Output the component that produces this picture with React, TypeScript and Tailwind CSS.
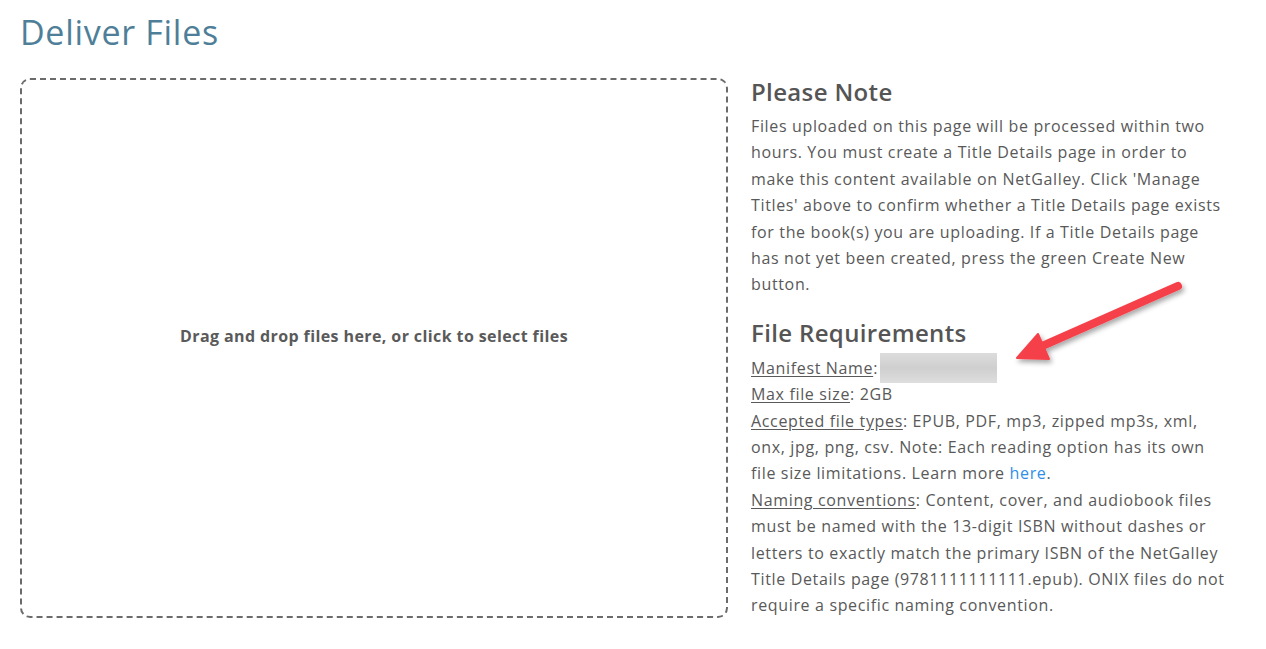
import React from 'react';

const font = { fontFamily: '"Open Sans", Lato, Arial, sans-serif' };

function Label({ children }: { children: React.ReactNode }) {
  return <span className="underline underline-offset-2">{children}</span>;
}

function Arrow() {
  return (
    <svg
      className="pointer-events-none absolute left-[1000px] top-[270px]"
      width="200"
      height="110"
      viewBox="0 0 200 110"
    >
      <defs>
        <filter id="shadow" x="-20%" y="-20%" width="140%" height="160%">
          <feDropShadow dx="2" dy="3" stdDeviation="2.5" floodColor="#000" floodOpacity="0.35" />
        </filter>
      </defs>
      <g filter="url(#shadow)" fill="#f5414a" stroke="#f5414a">
        <line x1="178" y1="16" x2="40" y2="77" strokeWidth="8" strokeLinecap="round" />
        <polygon points="17,88 38,64 49,89" strokeWidth="2" strokeLinejoin="round" />
      </g>
    </svg>
  );
}

export default function App() {
  return (
    <div className="relative min-h-[649px] bg-white px-5 pt-[12px] text-[#595959]" style={font}>
      <h1 className="text-[34px] leading-[41px] tracking-[0.7px] text-[#4f7f98]">Deliver Files</h1>

      <div className="mt-[25px] flex gap-[23px]">
        <div className="flex h-[540px] w-[708px] shrink-0 items-center justify-center rounded-[10px] border-2 border-dashed border-[#6b6b6b] pb-[24px]">
          <p className="text-[16px] font-bold tracking-[0.4px] text-[#5a5a5a]">
            Drag and drop files here, or click to select files
          </p>
        </div>

        <div className="-mt-[1px] w-[490px] whitespace-nowrap text-[16px] leading-[26.4px] tracking-[0.65px]">
          <h2 className="text-[24px] font-semibold leading-[30px] tracking-[0.35px] text-[#555]">Please Note</h2>
          <p className="mt-[6px]">
            Files uploaded on this page will be processed within two
            <br />
            hours. You must create a Title Details page in order to
            <br />
            make this content available on NetGalley. Click 'Manage
            <br />
            Titles' above to confirm whether a Title Details page exists
            <br />
            for the book(s) you are uploading. If a Title Details page
            <br />
            has not yet been created, press the green Create New
            <br />
            button.
          </p>

          <h2 className="mt-[20px] text-[24px] font-semibold leading-[30px] tracking-[0.35px] text-[#555]">
            File Requirements
          </h2>
          <div className="mt-[7px]">
            <div className="flex h-[26.4px] items-center">
              <Label>Manifest Name</Label>:
              <span className="ml-[2px] inline-block h-[30px] w-[117px] shrink-0 bg-gradient-to-b from-[#dcdcdc] via-[#cfcfcf] to-[#dedede]" />
            </div>
            <div>
              <Label>Max file size</Label>: 2GB
            </div>
            <div>
              <Label>Accepted file types</Label>: EPUB, PDF, mp3, zipped mp3s, xml,
              <br />
              onx, jpg, png, csv. Note: Each reading option has its own
              <br />
              file size limitations. Learn more <a className="text-[#2f8fe6]">here</a>.
            </div>
            <div>
              <Label>Naming conventions</Label>: Content, cover, and audiobook files
              <br />
              must be named with the 13-digit ISBN without dashes or
              <br />
              letters to exactly match the primary ISBN of the NetGalley
              <br />
              Title Details page (9781111111111.epub). ONIX files do not
              <br />
              require a specific naming convention.
            </div>
          </div>
        </div>
      </div>

      <Arrow />
    </div>
  );
}
